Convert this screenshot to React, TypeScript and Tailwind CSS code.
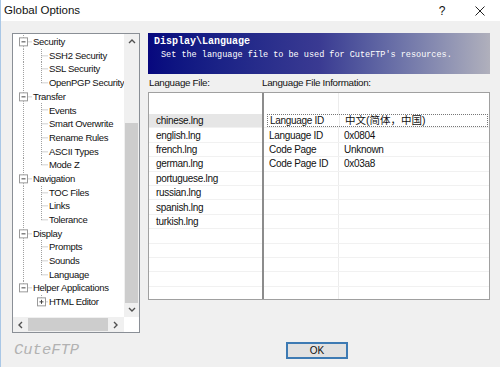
import React from 'react';

type TreeRow = {
    label: string;
    kind: 'group' | 'child';
    lastGroup: boolean;
    lastChild: boolean;
    plus?: boolean;
};

const tree = [
    { label: 'Security', children: ['SSH2 Security', 'SSL Security', 'OpenPGP Security'] },
    { label: 'Transfer', children: ['Events', 'Smart Overwrite', 'Rename Rules', 'ASCII Types', 'Mode Z'] },
    { label: 'Navigation', children: ['TOC Files', 'Links', 'Tolerance'] },
    { label: 'Display', children: ['Prompts', 'Sounds', 'Language'] },
    { label: 'Helper Applications', children: ['HTML Editor'] },
];

const rows: TreeRow[] = [];
tree.forEach((g, gi) => {
    const lastGroup = gi === tree.length - 1;
    rows.push({ label: g.label, kind: 'group', lastGroup, lastChild: false });
    g.children.forEach((c, ci) => {
        rows.push({
            label: c,
            kind: 'child',
            lastGroup,
            lastChild: ci === g.children.length - 1,
            plus: c === 'HTML Editor',
        });
    });
});

const ROW_H = 13.7;
const MID = ROW_H / 2;
const dot = { stroke: '#a0a0a0', strokeDasharray: '1 1', strokeWidth: 1 };

const Box = ({ cx, plus }: { cx: number; plus?: boolean }) => (
    <g>
        <rect x={cx - 4} y={MID - 4} width={8} height={8} fill="#fff" stroke="#9a9a9a" strokeWidth={1} />
        <line x1={cx - 2} y1={MID} x2={cx + 2} y2={MID} stroke="#444" strokeWidth={1} />
        {plus && <line x1={cx} y1={MID - 2} x2={cx} y2={MID + 2} stroke="#444" strokeWidth={1} />}
    </g>
);

const Connector = ({ row }: { row: TreeRow }) => {
    if (row.kind === 'group') {
        return (
            <svg width={20} height={ROW_H} className="shrink-0">
                <line x1={10.5} y1={0} x2={10.5} y2={MID - 4} {...dot} />
                {!row.lastGroup && <line x1={10.5} y1={MID + 4} x2={10.5} y2={ROW_H} {...dot} />}
                <line x1={14.5} y1={MID} x2={19} y2={MID} {...dot} />
                <Box cx={10.5} />
            </svg>
        );
    }
    return (
        <svg width={36} height={ROW_H} className="shrink-0">
            {!row.lastGroup && <line x1={10.5} y1={0} x2={10.5} y2={ROW_H} {...dot} />}
            {row.plus ? (
                <>
                    <line x1={28.5} y1={0} x2={28.5} y2={MID - 4} {...dot} />
                    <line x1={32.5} y1={MID} x2={35} y2={MID} {...dot} />
                    <Box cx={28.5} plus />
                </>
            ) : (
                <>
                    <line x1={28.5} y1={0} x2={28.5} y2={row.lastChild ? MID : ROW_H} {...dot} />
                    <line x1={28.5} y1={MID} x2={35} y2={MID} {...dot} />
                </>
            )}
        </svg>
    );
};

const Chevron = ({ dir }: { dir: 'up' | 'down' | 'left' | 'right' }) => {
    const pts = {
        up: '1,5 4,2 7,5',
        down: '1,2 4,5 7,2',
        left: '5,1 2,4 5,7',
        right: '2,1 5,4 2,7',
    }[dir];
    return (
        <svg width={8} height={8}>
            <polyline points={pts} fill="none" stroke="#505050" strokeWidth={1.4} />
        </svg>
    );
};

const files = ['chinese.lng', 'english.lng', 'french.lng', 'german.lng', 'portuguese.lng', 'russian.lng', 'spanish.lng', 'turkish.lng'];

const info = [
    { k: 'Language ID', v: '中文(简体，中国)' },
    { k: 'Language ID', v: '0x0804' },
    { k: 'Code Page', v: 'Unknown' },
    { k: 'Code Page ID', v: '0x03a8' },
];

const uiFont = { fontFamily: '"Liberation Sans", Arial, "Noto Sans CJK SC", sans-serif' };
const monoFont = { fontFamily: '"Liberation Mono", "Courier New", monospace' };

export default function App() {
    return (
        <div className="w-[500px] h-[367px] bg-[#f0f0f0] border-l border-[#a9c7e6] flex flex-col overflow-hidden text-[#111]" style={uiFont}>
            {/* Title bar */}
            <div className="h-[21px] bg-white flex items-center pl-[3px] shrink-0">
                <span className="text-[11.5px]">Global Options</span>
                <div className="ml-auto flex items-center">
                    <span className="w-[20px] text-center text-[12px]">?</span>
                    <span className="w-[20px] ml-[18px] flex justify-center">
                        <svg width={10} height={10}>
                            <line x1={0.5} y1={0.5} x2={9.5} y2={9.5} stroke="#222" strokeWidth={1} />
                            <line x1={9.5} y1={0.5} x2={0.5} y2={9.5} stroke="#222" strokeWidth={1} />
                        </svg>
                    </span>
                    <span className="w-[10px]" />
                </div>
            </div>

            {/* Main */}
            <div className="flex pl-[11px] pt-[12px] shrink-0">
                {/* Tree */}
                <div className="w-[128px] h-[300px] border border-[#8a8f96] bg-white flex flex-col">
                    <div className="flex flex-1 min-h-0">
                        <div className="flex-1 pt-[1px] overflow-hidden text-[9.5px] tracking-[-0.3px]">
                            {rows.map((r, i) => (
                                <div key={i} className="flex items-center h-[13.7px] whitespace-nowrap">
                                    <Connector row={r} />
                                    <span className="leading-none">{r.label}</span>
                                </div>
                            ))}
                        </div>
                        <div className="w-[15px] bg-[#f0f0f0] flex flex-col">
                            <div className="h-[15px] flex items-center justify-center"><Chevron dir="up" /></div>
                            <div className="h-[74px]" />
                            <div className="h-[180px] mx-[1px] bg-[#cdcdcd]" />
                            <div className="flex-1 flex items-center justify-center"><Chevron dir="down" /></div>
                        </div>
                    </div>
                    <div className="h-[15px] flex shrink-0">
                        <div className="flex-1 bg-[#f0f0f0] flex items-center">
                            <div className="w-[15px] flex justify-center"><Chevron dir="left" /></div>
                            <div className="w-[80px] h-[13px] bg-[#cdcdcd]" />
                            <div className="flex-1 flex justify-center"><Chevron dir="right" /></div>
                        </div>
                        <div className="w-[15px] bg-white" />
                    </div>
                </div>

                {/* Right column */}
                <div className="ml-[8px] w-[342px] flex flex-col">
                    <div className="h-[41px] bg-gradient-to-r from-[#07077e] via-[#3a3a92] to-[#b0b0bc] pl-[6px] pt-[3px] text-white" style={monoFont}>
                        <div className="text-[10px] font-bold leading-[12px]">{'Display\\Language'}</div>
                        <div className="text-[8.5px] leading-[12px] pl-[7px] mt-[1px]">Set the language file to be used for CuteFTP's resources.</div>
                    </div>
                    <div className="h-[18px] flex items-center text-[9.8px] tracking-[-0.3px]">
                        <span className="w-[114px] pl-[1px]">Language File:</span>
                        <span>Language File Information:</span>
                    </div>
                    <div className="h-[208px] border border-[#a0a0a0] bg-white flex overflow-hidden text-[10px] tracking-[-0.3px]">
                        {/* File list */}
                        <div className="w-[113px] flex flex-col">
                            <div className="h-[21px] shrink-0" />
                            {Array.from({ length: 13 }).map((_, i) => (
                                <div key={i} className={`h-[14.4px] shrink-0 flex items-center pl-[7px] border-b border-[#f1f1f1] ${i === 0 ? 'bg-[#e6e6e6]' : ''}`}>
                                    {files[i] ?? ''}
                                </div>
                            ))}
                        </div>
                        <div className="w-[2px] bg-[#8c8c8c]" />
                        {/* Info list */}
                        <div className="flex-1 flex flex-col">
                            <div className="h-[21px] shrink-0 flex">
                                <div className="w-[75px] border-r border-[#ececec]" />
                            </div>
                            {Array.from({ length: 13 }).map((_, i) => (
                                <div key={i} className="h-[14.4px] shrink-0 flex border-b border-[#f1f1f1]">
                                    <div className={`flex flex-1 ${i === 0 ? 'ml-[3px] mr-[1px] border border-dotted border-[#777]' : ''}`}>
                                        <div className={`${i === 0 ? 'w-[72px] pl-[2px]' : 'w-[75px] pl-[5px]'} border-r border-[#ececec] flex items-center`}>
                                            {info[i]?.k ?? ''}
                                        </div>
                                        <div className={`flex items-center pl-[5px] ${i === 0 ? 'text-[10.5px] tracking-normal' : ''}`}>
                                            {info[i]?.v ?? ''}
                                        </div>
                                    </div>
                                </div>
                            ))}
                        </div>
                    </div>
                </div>
            </div>

            {/* Bottom */}
            <div className="flex-1 flex items-center pl-[13px] pt-[1px]">
                <span className="w-[272px] italic text-[15.5px] text-[#b2b2b2]" style={monoFont}>CuteFTP</span>
                <button className="w-[62px] h-[17px] border-2 border-[#3d7ab3] bg-[#e1e1e1] text-[10px] flex items-center justify-center">
                    OK
                </button>
            </div>
        </div>
    );
}
